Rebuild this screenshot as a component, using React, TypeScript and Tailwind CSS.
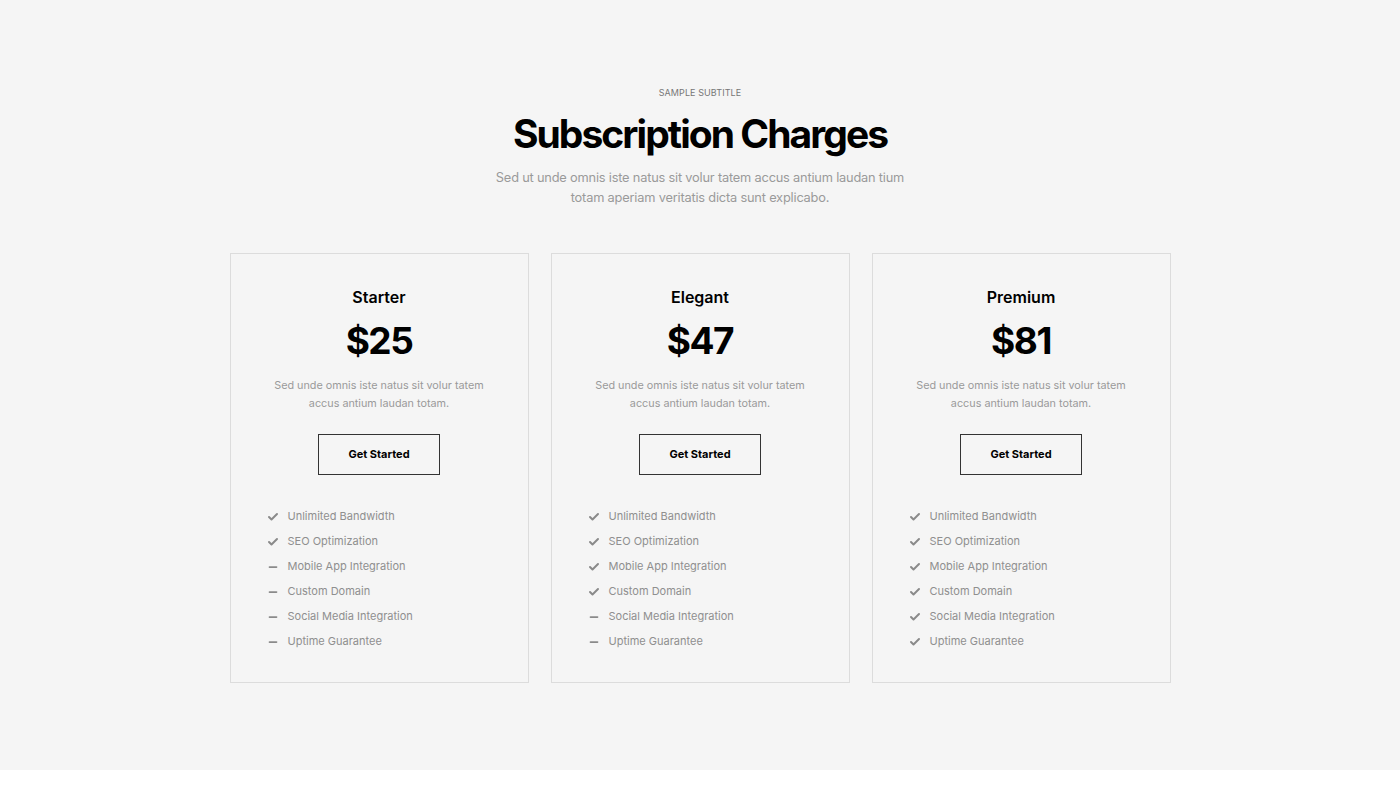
import { Check, Minus } from 'lucide-react';

const plans = [
    { name: 'Starter', price: '$25', included: 2 },
    { name: 'Elegant', price: '$47', included: 4 },
    { name: 'Premium', price: '$81', included: 6 },
];

const features = [
    'Unlimited Bandwidth',
    'SEO Optimization',
    'Mobile App Integration',
    'Custom Domain',
    'Social Media Integration',
    'Uptime Guarantee',
];

export default function App() {
    return (
        <div className="bg-white min-h-[788px]" style={{ fontFamily: 'Inter, "Noto Sans", sans-serif' }}>
            <section className="bg-[#f5f5f5] h-[770px] pt-[86px]">
                <div className="text-center">
                    <p className="text-[9px] uppercase text-[#777] tracking-[0.01em]">Sample Subtitle</p>
                    <h2 className="mt-[9px] text-[39px] leading-[50px] font-bold text-black tracking-[-0.05em]">
                        Subscription Charges
                    </h2>
                    <p className="mt-[9px] mx-auto max-w-[420px] text-[12.8px] leading-[20px] text-[#9a9a9a] tracking-[-0.015em]">
                        Sed ut unde omnis iste natus sit volur tatem accus antium laudan tium totam aperiam veritatis dicta sunt explicabo.
                    </p>
                </div>

                <div className="mt-[45px] flex justify-center gap-[22px]">
                    {plans.map((plan) => (
                        <div key={plan.name} className="w-[299px] h-[430px] border border-[#dcdcdc] pt-[32px] px-[36px]">
                            <div className="text-center">
                                <h3 className="text-[16px] leading-[22px] font-semibold text-black">{plan.name}</h3>
                                <p className="mt-[10px] text-[37px] leading-[46px] font-bold text-black tracking-[-0.04em]">{plan.price}</p>
                                <p className="mt-[13px] text-[10.8px] leading-[18px] text-[#9a9a9a] px-[4px]">
                                    Sed unde omnis iste natus sit volur tatem accus antium laudan totam.
                                </p>
                                <button className="mt-[21px] w-[122px] h-[41px] border border-[#333] text-[11px] font-bold text-black">
                                    Get Started
                                </button>
                            </div>
                            <ul className="mt-[33px] flex flex-col gap-[7px]">
                                {features.map((f, i) => (
                                    <li key={f} className="flex items-center h-[18px] text-[11px] text-[#8f8f8f]">
                                        <span className="w-[21px] flex items-center text-[#8a8a8a]">
                                            {i < plan.included ? (
                                                <Check size={12} strokeWidth={4} />
                                            ) : (
                                                <Minus size={12} strokeWidth={3.5} />
                                            )}
                                        </span>
                                        {f}
                                    </li>
                                ))}
                            </ul>
                        </div>
                    ))}
                </div>
            </section>
        </div>
    );
}
